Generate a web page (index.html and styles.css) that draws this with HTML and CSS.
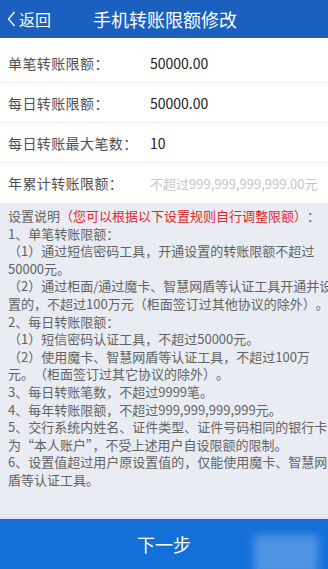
FILE: index.html
```html
<!DOCTYPE html>
<html lang="zh-CN">
<head>
    <meta charset="UTF-8">
    <meta name="viewport" content="width=device-width, initial-scale=1.0">
    <title>手机转账限额修改</title>
    <link rel="stylesheet" href="styles.css">
</head>
<body>
    <div class="page">
        <div class="header">
            <div class="back">
                <svg class="chevron" width="9" height="16" viewBox="0 0 9 16">
                    <polyline points="7.5,1 1.5,8 7.5,15" fill="none" stroke="#fff" stroke-width="1.3"/>
                </svg>
                <span>返回</span>
            </div>
            <div class="title">手机转账限额修改</div>
        </div>

        <div class="form">
            <div class="row">
                <div class="label">单笔转账限额：</div>
                <div class="value">50000.00</div>
            </div>
            <div class="row">
                <div class="label">每日转账限额：</div>
                <div class="value">50000.00</div>
            </div>
            <div class="row">
                <div class="label">每日转账最大笔数：</div>
                <div class="value">10</div>
            </div>
            <div class="row last">
                <div class="label">年累计转账限额：</div>
                <div class="value placeholder">不超过999,999,999,999.00元</div>
            </div>
        </div>

        <div class="notes">
            <div class="line">设置说明<span class="red"><span class="po">（</span>您可以根据以下设置规则自行调整限额<span class="pc">）</span></span>：</div>
            <div class="line">1、单笔转账限额：</div>
            <div class="line"><span class="po">（</span>1<span class="pc">）</span>通过短信密码工具，开通设置的转账限额不超过</div>
            <div class="line">50000元。</div>
            <div class="line"><span class="po">（</span>2<span class="pc">）</span>通过柜面/通过魔卡、智慧网盾等认证工具开通并设</div>
            <div class="line">置的，不超过100万元<span class="po">（</span>柜面签订过其他协议的除外<span class="pc">）</span>。</div>
            <div class="line">2、每日转账限额：</div>
            <div class="line"><span class="po">（</span>1<span class="pc">）</span>短信密码认证工具，不超过50000元。</div>
            <div class="line"><span class="po">（</span>2<span class="pc">）</span>使用魔卡、智慧网盾等认证工具，不超过100万</div>
            <div class="line">元。<span class="po">（</span>柜面签订过其它协议的除外<span class="pc">）</span>。</div>
            <div class="line">3、每日转账笔数，不超过9999笔。</div>
            <div class="line">4、每年转账限额，不超过999,999,999,999元。</div>
            <div class="line">5、交行系统内姓名、证件类型、证件号码相同的银行卡</div>
            <div class="line">为“本人账户”，不受上述用户自设限额的限制。</div>
            <div class="line">6、设置值超过用户原设置值的，仅能使用魔卡、智慧网</div>
            <div class="line">盾等认证工具。</div>
        </div>

        <div class="next">
            <span>下一步</span>
            <div class="smudge"></div>
        </div>
    </div>
</body>
</html>
```

FILE: styles.css
```css
body {
    margin: 0;
    font-family: "Noto Sans CJK SC", "Noto Sans", sans-serif;
    background: #e9edf3;
}
.page {
    width: 328px;
    height: 569px;
    display: flex;
    flex-direction: column;
    overflow: hidden;
}
.header {
    height: 38px;
    flex: none;
    background: #1b5fbf;
    color: #fff;
    display: flex;
    align-items: center;
    position: relative;
}
.back {
    display: flex;
    align-items: center;
    gap: 3px;
    padding-left: 7px;
    font-size: 16px;
}
.title {
    position: absolute;
    left: 0;
    right: 0;
    text-align: center;
    font-size: 18px;
    padding-left: 2px;
    pointer-events: none;
}
.form {
    flex: none;
    background: #fff;
    padding-top: 5px;
}
.row {
    height: 40px;
    display: grid;
    grid-template-columns: 142px 1fr;
    align-items: center;
    padding-left: 8px;
    border-bottom: 1px solid #efefef;
    box-sizing: border-box;
}
.row.last {
    border-bottom: none;
}
.label {
    font-size: 14px;
    color: #505050;
    letter-spacing: 0.4px;
    white-space: nowrap;
}
.value {
    font-size: 14px;
    color: #222;
    white-space: nowrap;
}
.value.placeholder {
    font-size: 13px;
    color: #c6c6c6;
}
.notes {
    flex: 1;
    padding: 4px 0 0 8px;
    font-size: 13px;
    line-height: 17.6px;
    color: #636363;
    overflow: hidden;
    border-bottom: 2px solid #e4e2f4;
}
.line {
    white-space: nowrap;
}
/* full-width brackets, chrome trims them otherwise */
.po,
.pc {
    display: inline-block;
    width: 1em;
}
.po {
    text-align: right;
}
.pc {
    text-align: left;
}
.red {
    color: #e3262c;
}
.next {
    height: 50px;
    flex: none;
    background: #1470d9;
    color: #fff;
    font-size: 18px;
    display: flex;
    align-items: center;
    justify-content: center;
    position: relative;
}
.smudge {
    position: absolute;
    left: 254px;
    top: 16px;
    width: 64px;
    height: 40px;
    background: rgba(190, 215, 245, 0.35);
    filter: blur(4px);
}
```
